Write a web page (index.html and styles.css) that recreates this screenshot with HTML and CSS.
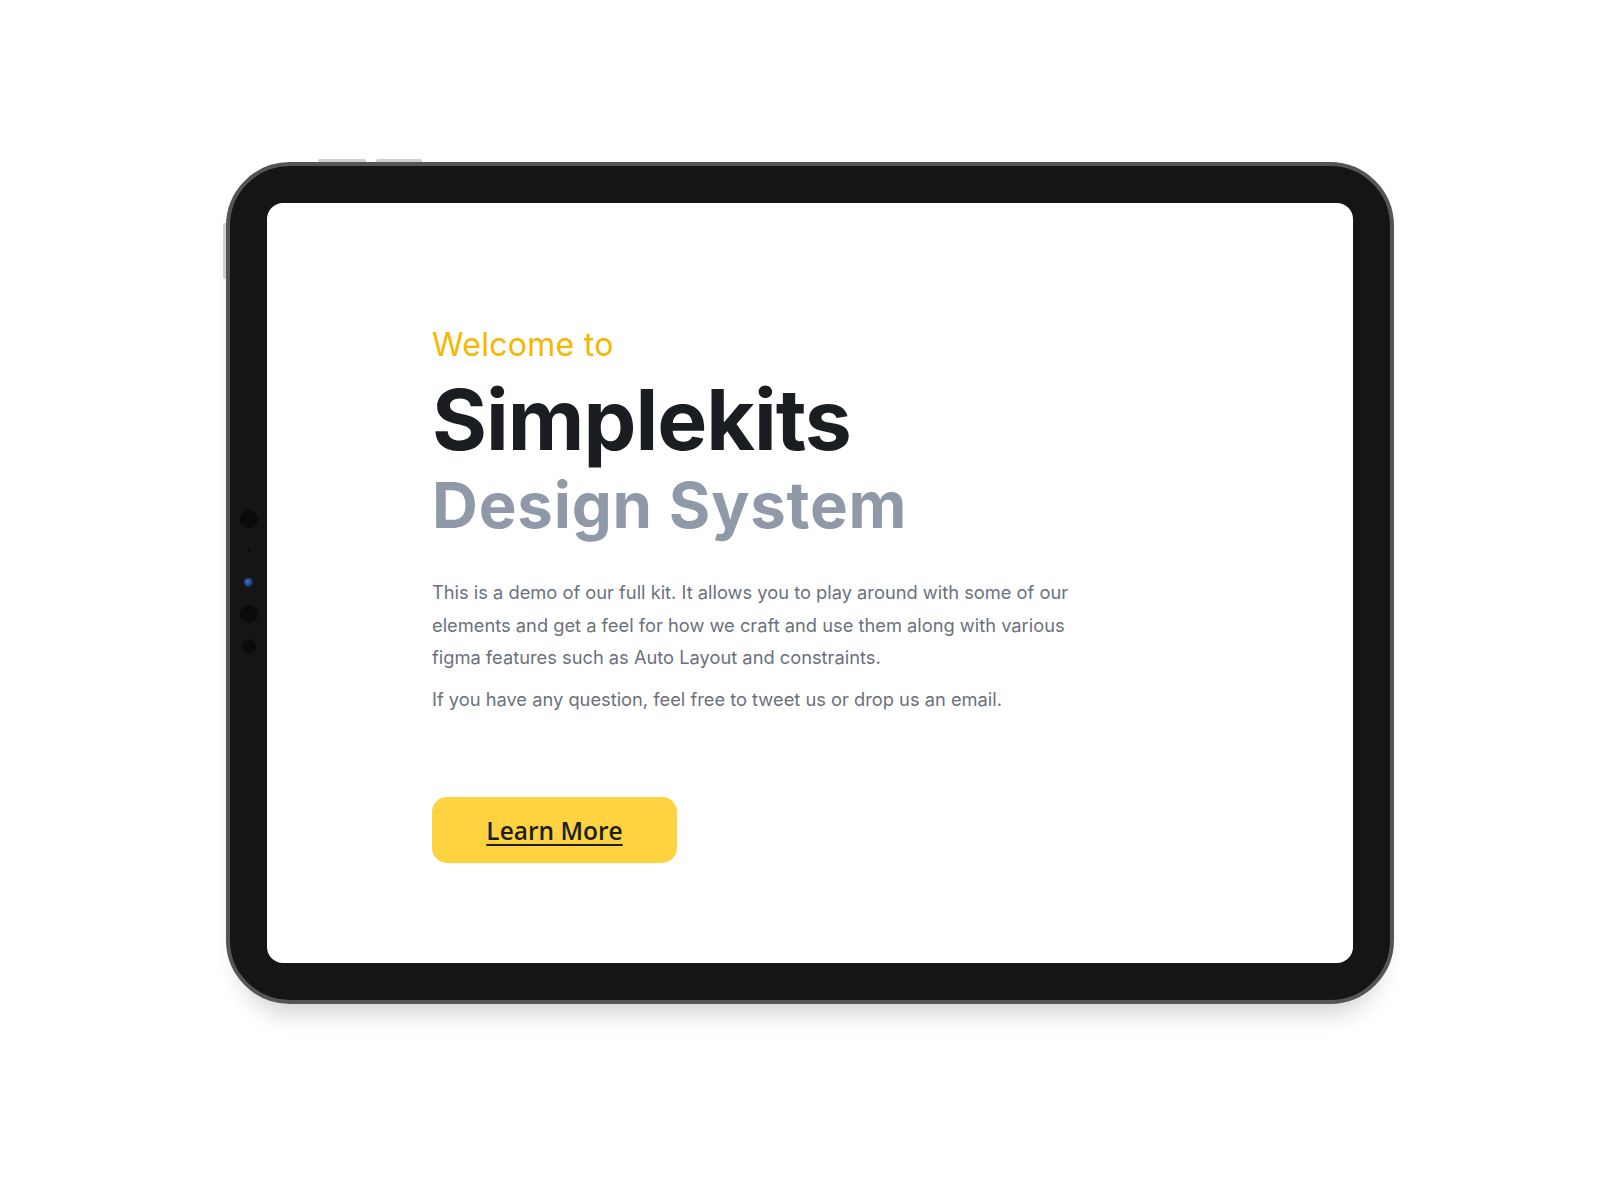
FILE: index.html
```html
<!DOCTYPE html>
<html lang="en">
<head>
<meta charset="utf-8">
<title>Simplekits Design System</title>
<link rel="stylesheet" href="styles.css">
</head>
<body>
<div class="page">
  <div class="tablet">
    <span class="btn-top btn-top-a"></span>
    <span class="btn-top btn-top-b"></span>
    <span class="btn-side"></span>
    <div class="cameras">
      <span class="dot dot-lg"></span>
      <span class="dot dot-xs"></span>
      <span class="dot dot-blue"></span>
      <span class="dot dot-lg dot-4"></span>
      <span class="dot dot-md"></span>
    </div>
    <div class="screen">
      <div class="hero">
        <p class="eyebrow">Welcome to</p>
        <h1 class="title">Simplekits</h1>
        <h2 class="subtitle">Design System</h2>
        <p class="lead">This is a demo of our full kit. It allows you to play around with some of our elements and get a feel for how we craft and use them along with various figma features such as Auto Layout and constraints.</p>
        <p class="lead lead-last">If you have any question, feel free to tweet us or drop us an email.</p>
        <a class="cta" href="#">Learn More</a>
      </div>
    </div>
  </div>
</div>
</body>
</html>
```

FILE: styles.css
```css
* { box-sizing: border-box; }

html, body {
  margin: 0;
  padding: 0;
  background: #ffffff;
}

.page {
  width: 1620px;
  height: 1200px;
  padding: 162px 0 0 226px;
  display: flex;
  align-items: flex-start;
}

.tablet {
  position: relative;
  width: 1168px;
  height: 842px;
  padding: 37px;
  background: #151515;
  border: 4px solid #555555;
  border-radius: 64px;
  box-shadow: 0 24px 26px -16px rgba(0, 0, 0, 0.2);
  display: flex;
}

.btn-top {
  position: absolute;
  top: -7px;
  height: 3px;
  background: #cfcfcf;
  border-radius: 2px 2px 0 0;
}
.btn-top-a { left: 88px; width: 48px; }
.btn-top-b { left: 146px; width: 46px; }

.btn-side {
  position: absolute;
  left: -7px;
  top: 57px;
  width: 3px;
  height: 56px;
  background: #cfcfcf;
  border-radius: 2px 0 0 2px;
}

.cameras {
  position: absolute;
  left: 0;
  top: 344px;
  width: 37px;
  display: flex;
  flex-direction: column;
  align-items: center;
}

.dot {
  display: block;
  border-radius: 50%;
  background: #0b0b0b;
}
.dot-lg { width: 18px; height: 18px; }
.dot-xs { width: 3px; height: 3px; margin-top: 21px; }
.dot-blue {
  width: 9px;
  height: 9px;
  margin-top: 26px;
  background: radial-gradient(circle at 40% 40%, #3d74c4 0%, #1c4486 50%, #0d1a30 100%);
}
.dot-4 { margin-top: 18px; }
.dot-md { width: 14px; height: 14px; margin-top: 16px; }

.screen {
  flex: 1;
  background: #ffffff;
  border-radius: 16px;
  padding: 122px 0 0 165px;
}

.hero {
  display: flex;
  flex-direction: column;
  align-items: flex-start;
  font-family: Inter, "Noto Sans", sans-serif;
}

.eyebrow {
  margin: 0;
  font-size: 32px;
  line-height: 40px;
  font-weight: 400;
  letter-spacing: 0.3px;
  color: #f5b700;
}

.title {
  margin: 7px 0 0;
  font-size: 84px;
  line-height: 96px;
  font-weight: 700;
  letter-spacing: -1px;
  color: #1a1d21;
}

.subtitle {
  margin: 0;
  font-size: 63.5px;
  line-height: 74px;
  font-weight: 700;
  letter-spacing: 0.8px;
  color: #8f99a8;
}

.lead {
  margin: 34px 0 0;
  width: 680px;
  font-size: 18.3px;
  line-height: 32.5px;
  font-weight: 400;
  color: #6b717b;
}

.lead-last {
  margin-top: 9px;
}

.cta {
  margin-top: 82px;
  width: 245px;
  height: 66px;
  display: flex;
  align-items: center;
  justify-content: center;
  background: #ffd23f;
  border-radius: 15px;
  font-family: "Open Sans", "Noto Sans", sans-serif;
  font-size: 24.5px;
  font-weight: 600;
  color: #1e1e1e;
  text-decoration: underline;
  text-underline-offset: 4px;
  text-decoration-thickness: 2px;
}
```
